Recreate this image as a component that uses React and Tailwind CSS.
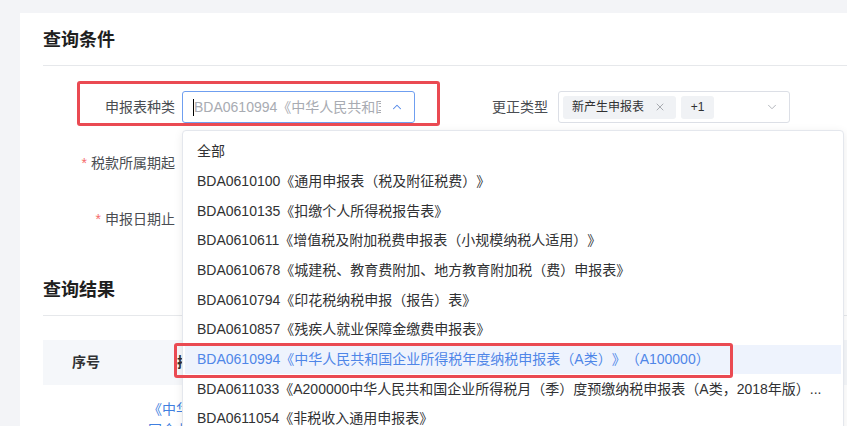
import React from 'react';
import { ChevronUp, ChevronDown, X } from 'lucide-react';

const options = [
  '全部',
  'BDA0610100《通用申报表（税及附征税费）》',
  'BDA0610135《扣缴个人所得税报告表》',
  'BDA0610611《增值税及附加税费申报表（小规模纳税人适用）》',
  'BDA0610678《城建税、教育费附加、地方教育附加税（费）申报表》',
  'BDA0610794《印花税纳税申报（报告）表》',
  'BDA0610857《残疾人就业保障金缴费申报表》',
  'BDA0610994《中华人民共和国企业所得税年度纳税申报表（A类）》（A100000）',
  'BDA0611033《A200000中华人民共和国企业所得税月（季）度预缴纳税申报表（A类，2018年版）...',
  'BDA0611054《非税收入通用申报表》',
  'BDA0611071《财务报表》',
];

const SELECTED = 7;

function Dropdown() {
  return (
    <div className="absolute left-[182px] top-[130px] w-[662px] h-[320px] bg-white border border-[#e4e7ed] shadow-[0_2px_10px_rgba(0,0,0,0.08)] rounded-[4px] pt-[6px] px-[2px]">
      {options.map((opt, i) => (
        <div
          key={opt}
          className={`h-[29.67px] flex items-center pl-[12px] pr-[12px] whitespace-nowrap overflow-hidden text-[14px] ${
            i === SELECTED ? 'bg-[#eef3fd] text-[#4f86e8]' : 'text-[#303133]'
          }`}
        >
          {opt}
        </div>
      ))}
    </div>
  );
}

function FormLabel({ children, required, width }) {
  return (
    <div className={`${width} shrink-0 text-right text-[14px] text-[#4a4d52]`}>
      {required && <span className="text-[#f56c6c] mr-[4px]">*</span>}
      {children}
    </div>
  );
}

export default function App() {
  return (
    <div className="relative w-[847px] h-[426px] overflow-hidden bg-[#f3f4f7] [text-spacing-trim:space-all] font-['Liberation_Sans','Noto_Sans_CJK_SC',sans-serif]">
      <div className="ml-[20px] mt-[13px] h-[500px] bg-white pl-[23px]">
        <div className="border-b border-[#e6e8eb] pt-[14px] pb-[12px]">
          <h2 className="text-[18px] leading-[26px] font-bold text-[#1f1f1f]">查询条件</h2>
        </div>

        <div className="mt-[25px] flex items-center h-[32px]">
          <FormLabel width="w-[132px]">申报表种类</FormLabel>
          <div className="ml-[7px] w-[233px] h-[32px] border border-[#6f9ff0] rounded-[3px] flex items-center pl-[10px] pr-[10px]">
            <span className="w-px h-[17px] bg-black shrink-0"></span>
            <span className="flex-1 whitespace-nowrap overflow-hidden text-[14px] text-[#a8abb2] mr-[9px]">
              BDA0610994《中华人民共和国企业所得税年度纳税申报表（A类）》
            </span>
            <ChevronUp size={14} strokeWidth={1.8} className="text-[#4f86e8] shrink-0" />
          </div>
          <FormLabel width="w-[133px]">更正类型</FormLabel>
          <div className="ml-[10px] w-[232px] h-[32px] border border-[#dcdfe6] rounded-[3px] flex items-center pl-[4px] pr-[10px] gap-[5px]">
            <span className="h-[23px] pl-[9px] pr-[10px] bg-[#f0f2f5] rounded-[3px] flex items-center gap-[10px] text-[12px] text-[#303133]">
              新产生申报表
              <X size={12} strokeWidth={1.5} className="text-[#909399]" />
            </span>
            <span className="h-[23px] w-[33px] justify-center bg-[#f0f2f5] rounded-[3px] flex items-center text-[12px] text-[#303133]">+1</span>
            <span className="flex-1"></span>
            <ChevronDown size={14} strokeWidth={1.5} className="text-[#a8abb2]" />
          </div>
        </div>

        <div className="mt-[24px] flex items-center h-[32px]">
          <FormLabel width="w-[132px]" required>税款所属期起</FormLabel>
          <div className="ml-[7px] w-[233px] h-[32px] border border-[#dcdfe6] rounded-[3px]"></div>
        </div>

        <div className="mt-[24px] flex items-center h-[32px]">
          <FormLabel width="w-[132px]" required>申报日期止</FormLabel>
          <div className="ml-[7px] w-[233px] h-[32px] border border-[#dcdfe6] rounded-[3px]"></div>
        </div>

        <div className="mt-[42px] border-b border-[#e6e8eb] pb-[12px]">
          <h2 className="text-[18px] leading-[26px] font-bold text-[#1f1f1f]">查询结果</h2>
        </div>

        <div className="mt-[24px]">
          <div className="flex h-[45px] items-center bg-[#f5f7fa] text-[14px] font-bold text-[#303133]">
            <div className="w-[86px] text-center">序号</div>
            <div className="pl-[48px]">排序</div>
          </div>
          <div className="flex pt-[14px] text-[14px] leading-[21px]">
            <div className="w-[86px]"></div>
            <div className="pl-[19px] w-[120px] text-[#3f7fe0]">
              《中华人民共和国企业所得税年度纳税申报表（A类）》
            </div>
          </div>
        </div>
      </div>

      <Dropdown />

      <div className="absolute left-[77px] top-[81px] w-[363px] h-[45px] border-[3px] border-[#ea4a52] rounded-[3px]"></div>
      <div className="absolute left-[174px] top-[343px] w-[559px] h-[35px] border-[3px] border-[#ea4a52] rounded-[3px]"></div>
    </div>
  );
}
